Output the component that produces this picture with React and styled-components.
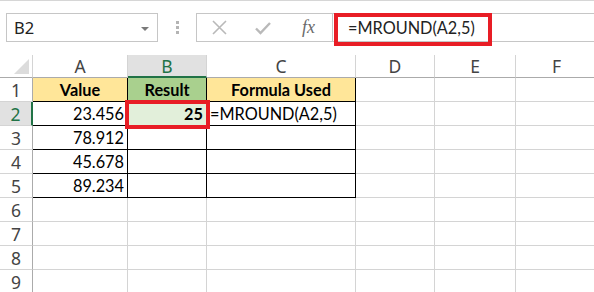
import React from "react";
import styled, { createGlobalStyle } from "styled-components";

const Global = createGlobalStyle`
  html, body {
    margin: 0;
    padding: 0;
    background: #fff;
    overflow: hidden;
  }
  * { box-sizing: border-box; }
`;

const Page = styled.div`
  width: 594px;
  height: 292px;
  overflow: hidden;
  font-family: "Noto Sans", "Open Sans", sans-serif;
`;

// formula bar row
const Bar = styled.div`
  height: 55px;
  border-top: 1px solid #d6d6d6;
  padding: 12px 0 0 6px;
  display: flex;
  align-items: flex-start;
`;

const NameBox = styled.div`
  width: 152px;
  height: 29px;
  border: 1px solid #c6c6c6;
  display: flex;
  align-items: center;
  justify-content: space-between;
  padding: 0 8px 0 7px;
  font-size: 16.5px;
  color: #222;
`;

const Caret = styled.span`
  width: 0;
  height: 0;
  border-left: 4px solid transparent;
  border-right: 4px solid transparent;
  border-top: 4px solid #7a7a7a;
  margin-top: 2px;
`;

const Grip = styled.div`
  width: 38px;
  height: 29px;
  display: flex;
  flex-direction: column;
  align-items: center;
  justify-content: center;
  gap: 2px;
  span {
    width: 3px;
    height: 3px;
    background: #b4b4b4;
  }
`;

const FormulaBox = styled.div`
  position: relative;
  flex: 1;
  height: 29px;
  border: 1px solid #c6c6c6;
  border-right: none;
  display: flex;
  align-items: center;
`;

const IconSlot = styled.div`
  width: 44px;
  height: 100%;
  display: flex;
  align-items: center;
  justify-content: center;
`;

const Fx = styled.span`
  width: 48px;
  text-align: center;
  font-family: "Liberation Serif", serif;
  font-style: italic;
  font-size: 18px;
  color: #6a6a6a;
  border-right: 1px solid #c6c6c6;
  height: 100%;
  display: flex;
  align-items: center;
  justify-content: center;
`;

const FormulaText = styled.span`
  padding-left: 15px;
  font-family: Lato, "Noto Sans", sans-serif;
  font-size: 16.3px;
  color: #222;
`;

const Callout = styled.div`
  position: absolute;
  left: 137px;
  top: -1px;
  width: 158px;
  height: 33px;
  border: 4px solid #e81d25;
`;

// sheet grid
const Sheet = styled.div`
  display: grid;
  grid-template-columns: 33px 95px 79px 149px 79px 81px 82px;
  grid-template-rows: 23px repeat(9, 24px);
`;

const Corner = styled.div`
  position: relative;
  border-right: 1px solid #d4d4d4;
  border-bottom: 1px solid #ababab;
  &::after {
    content: "";
    position: absolute;
    right: 3px;
    bottom: 3px;
    width: 0;
    height: 0;
    border-left: 15px solid transparent;
    border-bottom: 15px solid #dcdcdc;
  }
`;

const ColHead = styled.div`
  display: flex;
  align-items: center;
  justify-content: center;
  font-size: 17.5px;
  color: ${(p) => (p.$active ? "#217346" : "#444")};
  background: ${(p) => (p.$active ? "#e1e1e1" : "#fff")};
  border-right: 1px solid #d4d4d4;
  border-bottom: ${(p) => (p.$active ? "2px solid #217346" : "1px solid #ababab")};
`;

const RowHead = styled.div`
  display: flex;
  align-items: center;
  justify-content: center;
  font-size: 17.5px;
  color: ${(p) => (p.$active ? "#217346" : "#444")};
  background: ${(p) => (p.$active ? "#e1e1e1" : "#fff")};
  border-right: ${(p) => (p.$active ? "2px solid #217346" : "1px solid #ababab")};
  border-bottom: 1px solid #d4d4d4;
`;

const Cell = styled.div`
  position: relative;
  display: flex;
  align-items: center;
  justify-content: ${(p) =>
    p.$align === "right" ? "flex-end" : p.$align === "center" ? "center" : "flex-start"};
  padding: 0 3px 0 3px;
  font-family: Lato, "Noto Sans", sans-serif;
  font-size: 16.3px;
  font-weight: ${(p) => (p.$bold ? 700 : 400)};
  color: #000;
  white-space: nowrap;
  background: ${(p) => p.$bg || "#fff"};
  border-right: 1px solid ${(p) => (p.$table ? "#000" : "#d4d4d4")};
  border-bottom: 1px solid ${(p) => (p.$table ? "#000" : "#d4d4d4")};
  ${(p) =>
    p.$mark &&
    `
    z-index: 2;
    &::after {
      content: "";
      position: absolute;
      left: -3px;
      top: -2px;
      right: -4px;
      bottom: -4px;
      border: 4px solid #e81d25;
    }
  `}
`;

const XIcon = () => (
  <svg width="17" height="17" viewBox="0 0 17 17">
    <path d="M2 2 L15 15 M15 2 L2 15" stroke="#b9b9b9" strokeWidth="1.6" fill="none" />
  </svg>
);

const CheckIcon = () => (
  <svg width="18" height="16" viewBox="0 0 18 16">
    <path d="M2 8.5 L6.5 13 L16 3" stroke="#b9b9b9" strokeWidth="2.4" fill="none" />
  </svg>
);

const cols = ["A", "B", "C", "D", "E", "F"];

const titles = ["Value", "Result", "Formula Used"];

const data = [
  ["23.456", "25", "=MROUND(A2,5)"],
  ["78.912", "", ""],
  ["45.678", "", ""],
  ["89.234", "", ""],
];

const App = () => {
  const rows = [];
  for (let r = 1; r <= 9; r++) {
    rows.push(
      <RowHead key={"h" + r} $active={r === 2}>
        {r}
      </RowHead>
    );
    for (let c = 0; c < 6; c++) {
      const key = r + "-" + c;
      if (r === 1 && c < 3) {
        rows.push(
          <Cell key={key} $table $bold $align="center" $bg={c === 1 ? "#a9d08e" : "#ffe699"}>
            {titles[c]}
          </Cell>
        );
      } else if (r >= 2 && r <= 5 && c < 3) {
        const v = data[r - 2][c];
        const isResult = r === 2 && c === 1;
        rows.push(
          <Cell
            key={key}
            $table
            $align={c === 2 ? "left" : "right"}
            $bold={isResult}
            $bg={isResult ? "#e2efda" : undefined}
            $mark={isResult}
          >
            {v}
          </Cell>
        );
      } else {
        rows.push(<Cell key={key} />);
      }
    }
  }

  return (
    <Page>
      <Global />
      <Bar>
        <NameBox>
          B2
          <Caret />
        </NameBox>
        <Grip>
          <span />
          <span />
          <span />
        </Grip>
        <FormulaBox>
          <IconSlot>
            <XIcon />
          </IconSlot>
          <IconSlot>
            <CheckIcon />
          </IconSlot>
          <Fx>fx</Fx>
          <FormulaText>=MROUND(A2,5)</FormulaText>
          <Callout />
        </FormulaBox>
      </Bar>
      <Sheet>
        <Corner />
        {cols.map((c) => (
          <ColHead key={c} $active={c === "B"}>
            {c}
          </ColHead>
        ))}
        {rows}
      </Sheet>
    </Page>
  );
};

export default App;
